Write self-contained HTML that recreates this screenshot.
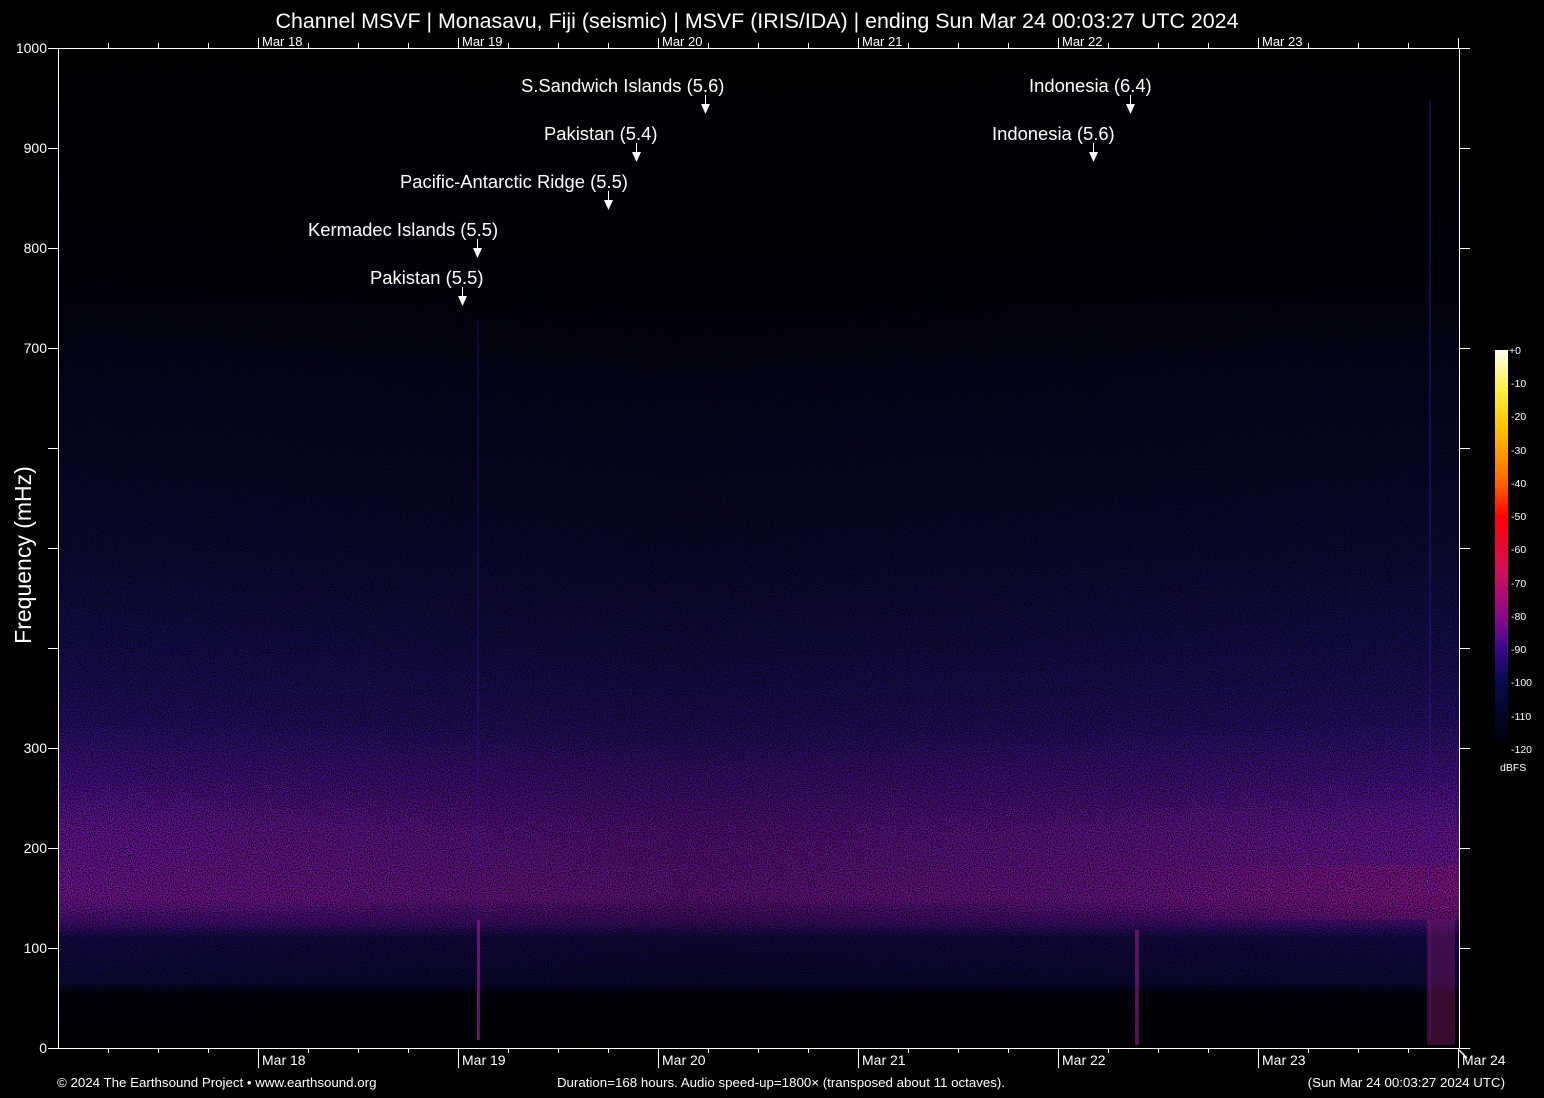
<!DOCTYPE html>
<html><head><meta charset="utf-8"><style>
html,body{margin:0;padding:0;background:#000;width:1544px;height:1098px;overflow:hidden}
svg{display:block}
text{font-family:"Liberation Sans",Arial,sans-serif;fill:#fff}
</style></head><body>
<svg width="1544" height="1098" viewBox="0 0 1544 1098" xmlns="http://www.w3.org/2000/svg">
<defs>
<linearGradient id="sp" x1="0" y1="0" x2="0" y2="1">
<stop offset="0" stop-color="#000003"/>
<stop offset="0.2" stop-color="#02020c"/>
<stop offset="0.35" stop-color="#070624"/>
<stop offset="0.5" stop-color="#0e0a3c"/>
<stop offset="0.6" stop-color="#170e58"/>
<stop offset="0.67" stop-color="#261070"/>
<stop offset="0.72" stop-color="#44128c"/>
<stop offset="0.78" stop-color="#6c16a0"/>
<stop offset="0.85" stop-color="#7c18a0"/>
<stop offset="0.875" stop-color="#4a1080"/>
<stop offset="0.89" stop-color="#140a50"/>
<stop offset="0.935" stop-color="#0e0a40"/>
<stop offset="0.945" stop-color="#030310"/>
<stop offset="1" stop-color="#020206"/>
</linearGradient>
<linearGradient id="lr" x1="0" y1="0" x2="1" y2="0">
<stop offset="0" stop-color="#000" stop-opacity="0"/>
<stop offset="0.45" stop-color="#000" stop-opacity="0.2"/>
<stop offset="0.75" stop-color="#000" stop-opacity="0.1"/>
<stop offset="1" stop-color="#000" stop-opacity="0"/>
</linearGradient>
<linearGradient id="rb" x1="0" y1="0" x2="1" y2="0">
<stop offset="0" stop-color="#a01880" stop-opacity="0"/>
<stop offset="1" stop-color="#a01880" stop-opacity="0.45"/>
</linearGradient>
<linearGradient id="cb" x1="0" y1="1" x2="0" y2="0">
<stop offset="0" stop-color="#000"/>
<stop offset="0.17" stop-color="#0a0a50"/>
<stop offset="0.25" stop-color="#3a0a8a"/>
<stop offset="0.33" stop-color="#8a0a8a"/>
<stop offset="0.45" stop-color="#d0105a"/>
<stop offset="0.58" stop-color="#ff0000"/>
<stop offset="0.67" stop-color="#ff6a00"/>
<stop offset="0.8" stop-color="#ffc000"/>
<stop offset="0.9" stop-color="#fff040"/>
<stop offset="1" stop-color="#fffff0"/>
</linearGradient>
<filter id="nz" x="0" y="0" width="100%" height="100%">
<feTurbulence type="fractalNoise" baseFrequency="0.95" numOctaves="1" seed="7"/>
<feColorMatrix type="matrix" values="0 0 0 0 0  0 0 0 0 0  0 0 0 0 0  0 0 0 -4 2.4"/>
</filter>
</defs>
<rect x="58" y="48" width="1401" height="1000" fill="url(#sp)"/>
<rect x="58" y="48" width="1401" height="1000" fill="url(#lr)"/>
<rect x="1100" y="865" width="359" height="55" fill="url(#rb)"/>
<rect x="58" y="48" width="1401" height="1000" filter="url(#nz)" opacity="0.75"/>
<rect x="477" y="320" width="2" height="720" fill="#3a1090" opacity="0.35"/>
<rect x="477" y="920" width="3" height="120" fill="#9a2090" opacity="0.6"/>
<rect x="1135" y="930" width="4" height="115" fill="#8a2080" opacity="0.6"/>
<rect x="1429" y="100" width="2" height="940" fill="#3a1090" opacity="0.45"/>
<rect x="1427" y="920" width="28" height="125" fill="#8a1a70" opacity="0.4"/>
<g stroke="#fff" stroke-width="1" fill="none">
<path d="M58.5 48V1048.5H1459.5V48.5H58.5"/>
<path d="M48 48.5h10M48 148.5h10M48 248.5h10M48 348.5h10M48 448.5h10M48 548.5h10M48 648.5h10M48 748.5h10M48 848.5h10M48 948.5h10M48 1048.5h10"/>
<path d="M1459 48.5h11M1459 148.5h11M1459 248.5h11M1459 348.5h11M1459 448.5h11M1459 548.5h11M1459 648.5h11M1459 748.5h11M1459 848.5h11M1459 948.5h11M1459 1048.5h11"/>
<path d="M108.5 1048v5M158.5 1048v5M208.5 1048v5M308.5 1048v5M358.5 1048v5M408.5 1048v5M508.5 1048v5M558.5 1048v5M608.5 1048v5M708.5 1048v5M758.5 1048v5M808.5 1048v5M908.5 1048v5M958.5 1048v5M1008.5 1048v5M1108.5 1048v5M1158.5 1048v5M1208.5 1048v5M1308.5 1048v5M1358.5 1048v5M1408.5 1048v5"/>
<path d="M258.5 1048v20M458.5 1048v20M658.5 1048v20M858.5 1048v20M1058.5 1048v20M1258.5 1048v20M1458.5 1048v20"/>
<path d="M108.5 48v-5M158.5 48v-5M208.5 48v-5M308.5 48v-5M358.5 48v-5M408.5 48v-5M508.5 48v-5M558.5 48v-5M608.5 48v-5M708.5 48v-5M758.5 48v-5M808.5 48v-5M908.5 48v-5M958.5 48v-5M1008.5 48v-5M1108.5 48v-5M1158.5 48v-5M1208.5 48v-5M1308.5 48v-5M1358.5 48v-5M1408.5 48v-5"/>
<path d="M258.5 48v-10M458.5 48v-10M658.5 48v-10M858.5 48v-10M1058.5 48v-10M1258.5 48v-10M1458.5 48v-10"/>
<path d="M1459 1050l8 8" stroke-width="1.5"/>
</g>
<text x="757" y="28" font-size="21.4" text-anchor="middle">Channel MSVF | Monasavu, Fiji (seismic) | MSVF (IRIS/IDA) | ending Sun Mar 24 00:03:27 UTC 2024</text>
<g font-size="13">
<text x="262" y="46">Mar 18</text><text x="462" y="46">Mar 19</text><text x="662" y="46">Mar 20</text><text x="862" y="46">Mar 21</text><text x="1062" y="46">Mar 22</text><text x="1262" y="46">Mar 23</text>
</g>
<g font-size="14">
<text x="262" y="1065">Mar 18</text><text x="462" y="1065">Mar 19</text><text x="662" y="1065">Mar 20</text><text x="862" y="1065">Mar 21</text><text x="1062" y="1065">Mar 22</text><text x="1262" y="1065">Mar 23</text><text x="1462" y="1065">Mar 24</text>
</g>
<g font-size="14" text-anchor="end">
<text x="47" y="53">1000</text><text x="47" y="153">900</text><text x="47" y="253">800</text><text x="47" y="353">700</text>
<text x="47" y="753">300</text><text x="47" y="853">200</text><text x="47" y="953">100</text><text x="47" y="1053">0</text>
</g>
<text transform="translate(31,555) rotate(-90)" font-size="23" text-anchor="middle">Frequency (mHz)</text>
<g font-size="18.4">
<text x="521" y="92">S.Sandwich Islands (5.6)</text>
<text x="544" y="140">Pakistan (5.4)</text>
<text x="400" y="188">Pacific-Antarctic Ridge (5.5)</text>
<text x="308" y="236">Kermadec Islands (5.5)</text>
<text x="370" y="284">Pakistan (5.5)</text>
<text x="1029" y="92">Indonesia (6.4)</text>
<text x="992" y="140">Indonesia (5.6)</text>
</g>
<g stroke="#fff" stroke-width="1">
<path d="M705.5 95v10M636.5 143v10M608.5 191v10M477.5 239v10M462.5 287v10M1130.5 95v10M1093.5 143v10"/>
</g>
<g fill="#fff">
<path d="M701 104h9l-4.5 10z"/><path d="M632 152h9l-4.5 10z"/><path d="M604 200h9l-4.5 10z"/><path d="M473 248h9l-4.5 10z"/><path d="M458 296h9l-4.5 10z"/><path d="M1126 104h9l-4.5 10z"/><path d="M1089 152h9l-4.5 10z"/>
</g>
<rect x="1495" y="350" width="13" height="398" fill="url(#cb)"/>
<g font-size="10.5" fill="#ddd">
<text x="1509" y="354">+0</text><text x="1511" y="387">-10</text><text x="1511" y="420">-20</text><text x="1511" y="454">-30</text><text x="1511" y="487">-40</text><text x="1511" y="520">-50</text><text x="1511" y="553">-60</text><text x="1511" y="587">-70</text><text x="1511" y="620">-80</text><text x="1511" y="653">-90</text><text x="1511" y="686">-100</text><text x="1511" y="720">-110</text><text x="1511" y="753">-120</text>
<text x="1500" y="771">dBFS</text>
</g>
<g font-size="13.3">
<text x="57" y="1087">© 2024 The Earthsound Project • www.earthsound.org</text>
<text x="781" y="1087" text-anchor="middle">Duration=168 hours. Audio speed-up=1800× (transposed about 11 octaves).</text>
<text x="1505" y="1087" text-anchor="end">(Sun Mar 24 00:03:27 2024 UTC)</text>
</g>
</svg>
</body></html>
